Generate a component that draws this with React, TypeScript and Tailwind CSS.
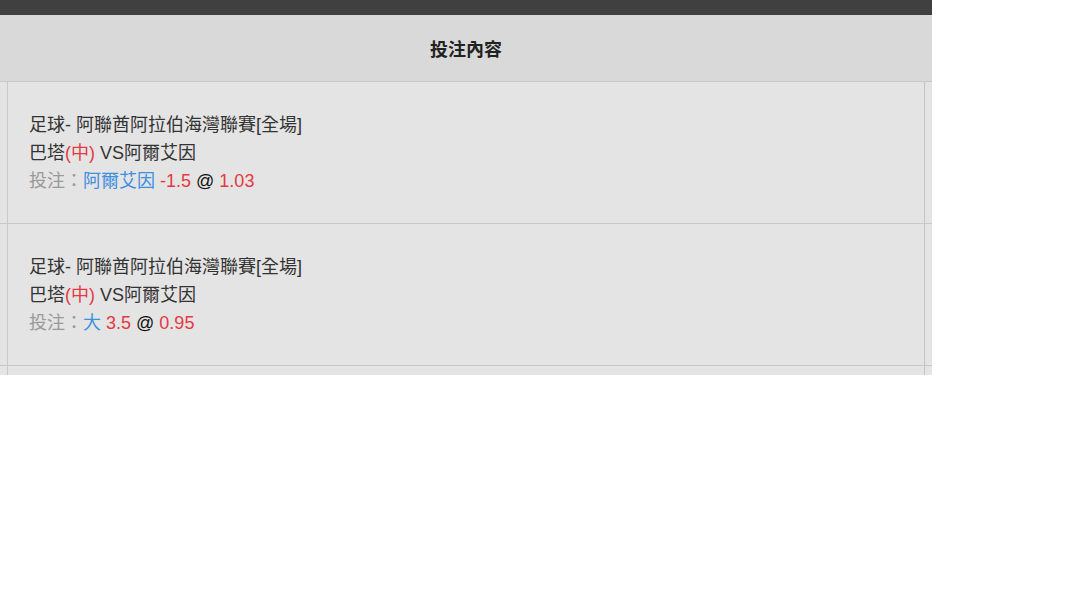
import React from 'react';

type Bet = {
  id: number;
  league: string;
  home: string;
  away: string;
  pick: string;
  line: string;
  odds: string;
};

const bets: Bet[] = [
  { id: 1, league: '足球- 阿聯酋阿拉伯海灣聯賽[全場]', home: '巴塔', away: '阿爾艾因', pick: '阿爾艾因', line: '-1.5', odds: '1.03' },
  { id: 2, league: '足球- 阿聯酋阿拉伯海灣聯賽[全場]', home: '巴塔', away: '阿爾艾因', pick: '大', line: '3.5', odds: '0.95' },
];

const font = { fontFamily: '"Liberation Sans", "Noto Sans CJK TC", sans-serif' };

function RowFrame({ children }: { children?: React.ReactNode }) {
  return (
    <div className="flex h-[142px] border-b border-[#c9c9c9] bg-[#e4e4e4]">
      <div className="w-[8px] border-r border-[#c9c9c9]" />
      <div className="flex-1 flex flex-col justify-center pl-[21px] text-[18px] leading-[28px] text-[#333]">
        {children}
      </div>
      <div className="w-[8px] border-l border-[#c4c4c4]" />
    </div>
  );
}

function BetRow({ bet }: { bet: Bet }) {
  return (
    <RowFrame>
      <div>{bet.league}</div>
      <div>
        {bet.home}
        <span className="text-[#e5393f]">(中)</span> VS{bet.away}
      </div>
      <div>
        <span className="text-[#999]">投注：</span>
        <span className="text-[#3d8fe0]">{bet.pick}</span>{' '}
        <span className="text-[#e5393f]">{bet.line}</span>{' '}
        <span className="text-[#111]">@</span>{' '}
        <span className="text-[#e5393f]">{bet.odds}</span>
      </div>
    </RowFrame>
  );
}

export default function App() {
  return (
    <div className="w-[1080px] h-[608px] bg-white" style={font}>
      <div className="w-[932px] h-[375px] overflow-hidden">
        <div className="h-[15px] bg-[#404040]" />
        <div className="h-[67px] bg-[#d9d9d9] border-b border-[#c8c8c8] flex items-center justify-center pt-[5px]">
          <span className="text-[18px] font-bold text-[#222]">投注內容</span>
        </div>
        {bets.map((b) => (
          <BetRow key={b.id} bet={b} />
        ))}
        {/* next row, only its top edge is visible */}
        <RowFrame />
      </div>
    </div>
  );
}
